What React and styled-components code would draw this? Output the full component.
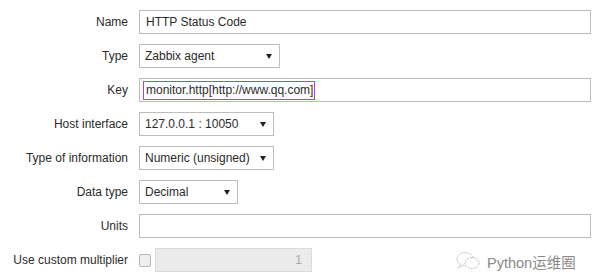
import React from "react";
import styled, { createGlobalStyle } from "styled-components";

const Global = createGlobalStyle`
  html, body { margin: 0; padding: 0; background: #fff; }
  body { font-family: "Liberation Sans", Arial, sans-serif; }
  * { box-sizing: border-box; }
`;

const Page = styled.div`
  position: relative;
  width: 594px;
  height: 279px;
  overflow: hidden;
  background: #fff;
`;

const Form = styled.div`
  display: grid;
  grid-template-columns: 128px 452px;
  column-gap: 11px;
  row-gap: 10px;
  padding-top: 10px;
`;

const Label = styled.div`
  text-align: right;
  align-self: center;
  font-size: 12px;
  color: #2b2b2b;
  white-space: nowrap;
`;

const Box = styled.div`
  height: 24px;
  width: ${(p) => (p.$w ? `${p.$w}px` : "100%")};
  border: 1px solid #bdbdbd;
  background: #fff;
  display: flex;
  align-items: center;
  padding: 0 ${(p) => (p.$pr ? p.$pr : 6)}px 0 ${(p) => (p.$pl ? p.$pl : 6)}px;
  font-size: 12px;
  color: #2b2b2b;
  white-space: nowrap;
`;

const SelectBox = styled(Box)`
  justify-content: space-between;
`;

const Arrow = styled.span`
  width: 0;
  height: 0;
  border-left: 3px solid transparent;
  border-right: 3px solid transparent;
  border-top: 5px solid #222;
`;

const Highlight = styled.span`
  border: 1px solid #c23bc4;
  padding: 1px 1px 2px 2px;
  margin-left: -3px;
  line-height: 14px;
`;

const MultiRow = styled.div`
  display: flex;
  align-items: center;
  gap: 4px;
`;

const Check = styled.span`
  width: 12px;
  height: 13px;
  border: 1px solid #b5b5b5;
  border-radius: 2px;
  background: #efefef;
`;

const Disabled = styled.div`
  width: 157px;
  height: 24px;
  border: 1px solid #dadada;
  background: #ebebeb;
  display: flex;
  align-items: center;
  justify-content: flex-end;
  padding-right: 9px;
  font-size: 12px;
  color: #a8a8a8;
`;

const Watermark = styled.div`
  position: absolute;
  left: 455px;
  top: 250px;
  display: flex;
  align-items: center;
  gap: 4px;
  font-family: "Liberation Sans", "Noto Sans CJK SC", sans-serif;
  font-size: 14.5px;
  color: #8a8a8a;
`;

const Select = ({ w, children }) => (
  <SelectBox $w={w} $pl={5} $pr={7}>
    <span>{children}</span>
    <Arrow />
  </SelectBox>
);

export default function App() {
  return (
    <Page>
      <Global />
      <Form>
        <Label>Name</Label>
        <Box>HTTP Status Code</Box>

        <Label>Type</Label>
        <Select w={141}>Zabbix agent</Select>

        <Label>Key</Label>
        <Box>
          <Highlight>monitor.http[http://www.qq.com]</Highlight>
        </Box>

        <Label>Host interface</Label>
        <Select w={135}>127.0.0.1 : 10050</Select>

        <Label>Type of information</Label>
        <Select w={135}>Numeric (unsigned)</Select>

        <Label>Data type</Label>
        <Select w={99}>Decimal</Select>

        <Label>Units</Label>
        <Box />

        <Label>Use custom multiplier</Label>
        <MultiRow>
          <Check />
          <Disabled>1</Disabled>
        </MultiRow>
      </Form>
      <Watermark>
        <svg width="28" height="22" viewBox="0 0 28 22" fill="none" stroke="#bdbdbd" strokeWidth="1" strokeDasharray="2 1">
          <ellipse cx="10" cy="9" rx="8" ry="6.5" />
          <ellipse cx="17" cy="13" rx="7" ry="5.5" fill="#fff" />
          <path d="M5 15 l-2 3 l4 -2" />
        </svg>
        <span>Python运维圈</span>
      </Watermark>
    </Page>
  );
}
